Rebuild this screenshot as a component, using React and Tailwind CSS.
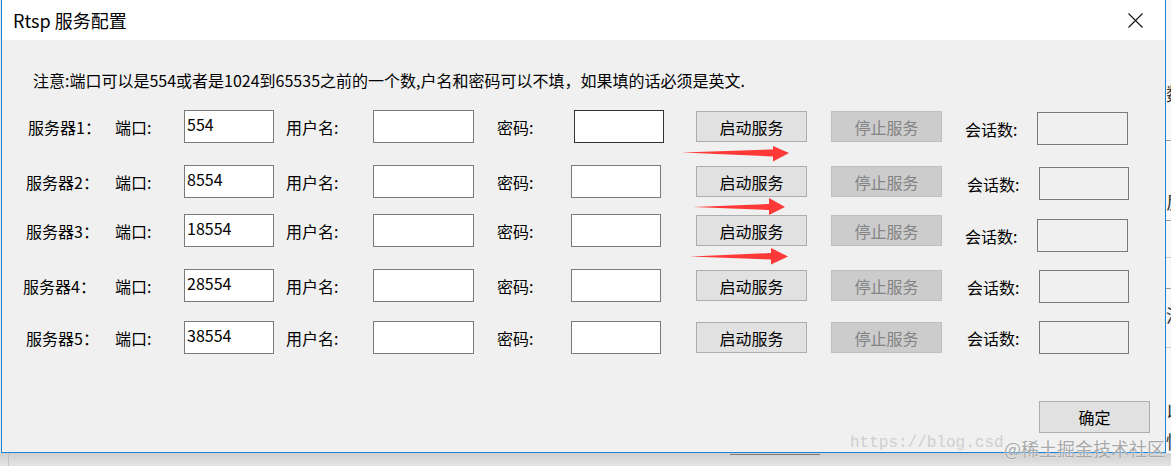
const rows = [
    { name: "服务器1：", port: "554", top: "mt-[19px]", labelPl: "pl-[26px]", pwdW: "w-[77px]", pwdBorder: "border-[#333333]", sessMl: "ml-[23px]", sessMt: "mt-[2px]", sessW: "w-[91px]" },
    { name: "服务器2：", port: "8554", top: "mt-[22px]", labelPl: "pl-[24px]", pwdW: "w-[74px]", pwdBorder: "border-[#7a7a7a]", sessMl: "ml-[25px]", sessMt: "mt-[2px]", sessW: "w-[90px]" },
    { name: "服务器3：", port: "18554", top: "mt-[16px]", labelPl: "pl-[24px]", pwdW: "w-[74px]", pwdBorder: "border-[#7a7a7a]", sessMl: "ml-[23px]", sessMt: "mt-[5px]", sessW: "w-[91px]" },
    { name: "服务器4：", port: "28554", top: "mt-[22px]", labelPl: "pl-[21px]", pwdW: "w-[74px]", pwdBorder: "border-[#7a7a7a]", sessMl: "ml-[25px]", sessMt: "mt-[1px]", sessW: "w-[90px]" },
    { name: "服务器5：", port: "38554", top: "mt-[19px]", labelPl: "pl-[24px]", pwdW: "w-[74px]", pwdBorder: "border-[#7a7a7a]", sessMl: "ml-[25px]", sessMt: "mt-[0px]", sessW: "w-[90px]" },
];

function ServerRow({ row }) {
    return (
        <div className={`flex items-start h-[33px] ${row.top}`}>
            <div className={`w-[113px] h-[33px] flex items-center shrink-0 ${row.labelPl}`}>{row.name}</div>
            <div className="w-[69px] h-[33px] flex items-center shrink-0">端口:</div>
            <div className="w-[90px] h-[33px] shrink-0 bg-white border border-[#7a7a7a] pl-[2px] pt-[2px] text-[16px] leading-[22px]">{row.port}</div>
            <div className="ml-[12px] w-[87px] h-[33px] flex items-center shrink-0">用户名:</div>
            <div className="w-[101px] h-[33px] shrink-0 bg-white border border-[#7a7a7a]"></div>
            <div className="ml-[23px] w-[199px] h-[33px] flex items-center shrink-0">
                <div className={`${row.pwdW} shrink-0`}>密码:</div>
                <div className={`w-[90px] h-[33px] shrink-0 bg-white border ${row.pwdBorder}`}></div>
            </div>
            <button className="mt-[1px] w-[111px] h-[31px] shrink-0 bg-[#e1e1e1] border border-[#adadad] text-black">启动服务</button>
            <button className="ml-[24px] mt-[1px] w-[111px] h-[31px] shrink-0 bg-[#cccccc] border border-[#bfbfbf] text-[#838383]">停止服务</button>
            <div className={`${row.sessMl} ${row.sessMt} w-[72px] h-[33px] flex items-center shrink-0`}>会话数:</div>
            <div className={`${row.sessMt} ${row.sessW} h-[33px] shrink-0 bg-[#f0f0f0] border border-[#7a7a7a]`}></div>
        </div>
    );
}

export default function App() {
    return (
        <div
            className="relative w-[1171px] h-[466px] overflow-hidden bg-[#dedede] text-[16px] text-black"
            style={{ fontFamily: '"Noto Sans CJK SC", "Noto Sans", sans-serif' }}
        >
            <div className="flex h-[453px]">
                <div className="w-px shrink-0 bg-[#e8e8e8]"></div>
                <div className="w-[1165px] shrink-0 flex flex-col border-l border-r border-b border-[#1883d7]">
                    <div className="h-[40px] bg-white flex items-center justify-between pl-[11px] pr-[22px]">
                        <span className="text-[18px]">Rtsp 服务配置</span>
                        <svg width="15" height="15" viewBox="0 0 15 15">
                            <path d="M0.5 0.5 L14.5 14.5 M14.5 0.5 L0.5 14.5" stroke="#111" strokeWidth="1.1" fill="none" />
                        </svg>
                    </div>
                    <div className="flex-1 bg-[#f0f0f0] flex flex-col">
                        <div className="pt-[29px] pl-[31px] leading-[22px]">
                            注意:端口可以是554或者是1024到65535之前的一个数,户名和密码可以不填，如果填的话必须是英文.
                        </div>
                        {rows.map((row) => (
                            <ServerRow key={row.name} row={row} />
                        ))}
                        <div className="flex justify-end mt-[47px] pr-[15px]">
                            <button className="w-[111px] h-[32px] bg-[#e1e1e1] border border-[#adadad]">确定</button>
                        </div>
                    </div>
                </div>
                <div className="relative flex-1 bg-[#f7f7f7] overflow-hidden text-[#333]">
                    <div className="absolute left-0 top-[84px] text-[18px] leading-none">数</div>
                    <div className="absolute left-0 top-[140px] w-full h-px bg-[#9a9a9a]"></div>
                    <div className="absolute left-0 top-[192px] text-[18px] leading-none">反</div>
                    <div className="absolute left-0 top-[220px] w-full h-px bg-[#9a9a9a]"></div>
                    <div className="absolute left-0 top-[257px] w-full h-px bg-[#c8c8c8]"></div>
                    <div className="absolute left-0 top-[288px] w-full h-px bg-[#9a9a9a]"></div>
                    <div className="absolute left-0 top-[306px] text-[18px] leading-none">泥</div>
                    <div className="absolute left-0 top-[347px] w-full h-px bg-[#c8c8c8]"></div>
                    <div className="absolute left-0 top-[402px] text-[18px] leading-none">以</div>
                    <div className="absolute left-0 top-[432px] text-[18px] leading-none">性</div>
                </div>
            </div>
            <div className="relative h-[13px] bg-gradient-to-b from-[#cfcfcf] to-[#e4e4e4]">
                <div className="absolute left-[8px] top-0 w-px h-full bg-[#c4c4c4]"></div>
                <div className="absolute left-[730px] top-[1px] w-[90px] h-px bg-[#7a7a7a]"></div>
            </div>

            <svg className="absolute left-0 top-0 pointer-events-none" width="1171" height="466">
                <polygon points="682,152.5 773,149.5 773,146 789,153 773,161.5 773,156.5" fill="#ff3838" />
                <polygon points="693,207 769,204 769,198 785,207 769,215 769,210" fill="#ff3838" />
                <polygon points="690,256.5 771,253 771,248 788,256.5 771,264.5 771,259.5" fill="#ff3838" />
            </svg>

            <div
                className="absolute left-[850px] top-[433px] text-[16px] leading-[20px] text-[#cfcfcf]"
                style={{ fontFamily: '"Liberation Mono", monospace' }}
            >
                https://blog.csd
            </div>
            <div className="absolute left-[1004px] top-[437px] text-[18px] leading-[22px] text-[#a8a8a8] [text-shadow:0_0_2px_#fff]">
                @稀土掘金技术社区
            </div>
        </div>
    );
}
